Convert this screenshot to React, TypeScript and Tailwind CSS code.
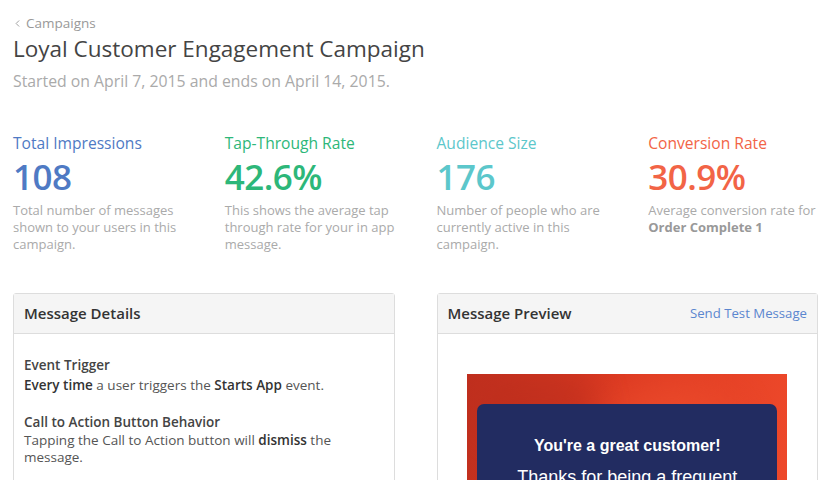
import { ChevronLeft } from 'lucide-react';

const stats = [
  {
    label: 'Total Impressions',
    value: '108',
    color: 'text-[#4f7ac4]',
    desc: <>Total number of messages shown to your users in this campaign.</>,
  },
  {
    label: 'Tap-Through Rate',
    value: '42.6%',
    color: 'text-[#2db779]',
    desc: <>This shows the average tap through rate for your in app message.</>,
  },
  {
    label: 'Audience Size',
    value: '176',
    color: 'text-[#5cc7cb]',
    desc: <>Number of people who are currently active in this campaign.</>,
  },
  {
    label: 'Conversion Rate',
    value: '30.9%',
    color: 'text-[#f26446]',
    desc: (
      <>
        Average conversion rate for <b className="font-bold text-[#999]">Order Complete 1</b>
      </>
    ),
  },
];

const App = () => {
  return (
    <div className="min-h-screen bg-white pl-[13px] pr-[12px] font-['Open_Sans',sans-serif] text-[#444]">
      {/* Header */}
      <div className="pt-[14px]">
        <a className="flex items-center gap-[3px] text-[13.5px] leading-[18px] text-[#999]">
          <ChevronLeft className="h-[11px] w-[11px] -ml-[1px]" strokeWidth={2} />
          Campaigns
        </a>
        <h1 className="mt-[2px] text-[22.5px] leading-[30px] text-[#444]">Loyal Customer Engagement Campaign</h1>
        <p className="mt-[6px] text-[15.8px] leading-[22px] text-[#aaa]">
          Started on April 7, 2015 and ends on April 14, 2015.
        </p>
      </div>

      {/* Stats */}
      <div className="mt-[42px] grid grid-cols-4 gap-[42px]">
        {stats.map((stat, index) => (
          <div key={index}>
            <div className={`text-[15.6px] leading-[18px] ${stat.color}`}>{stat.label}</div>
            <div className={`mt-[1px] text-[35px] font-semibold leading-[48px] tracking-[-0.5px] ${stat.color}`}>
              {stat.value}
            </div>
            <p className="mt-[1px] text-[13px] leading-[17px] text-[#aaa]">{stat.desc}</p>
          </div>
        ))}
      </div>

      {/* Panels */}
      <div className="mt-[40px] grid grid-cols-2 gap-[42px]">
        <div className="rounded-[3px] border border-[#ddd]">
          <div className="flex h-[40px] items-center border-b border-[#ddd] bg-[#f5f5f5] px-[10px]">
            <h2 className="text-[15px] font-semibold text-[#333]">Message Details</h2>
          </div>
          <div className="px-[10px] pt-[22px] pb-[20px] text-[13.5px] leading-[18px] text-[#555]">
            <div className="font-semibold text-[#444]">Event Trigger</div>
            <p className="mt-[2px]">
              <b className="font-semibold text-[#333]">Every time</b> a user triggers the{' '}
              <b className="font-semibold text-[#333]">Starts App</b> event.
            </p>
            <div className="mt-[19px] font-semibold text-[#444]">Call to Action Button Behavior</div>
            <p className="mt-[1px] leading-[17px]">
              Tapping the Call to Action button will <b className="font-semibold text-[#333]">dismiss</b> the
              message.
            </p>
          </div>
        </div>

        <div className="rounded-[3px] border border-[#ddd]">
          <div className="flex h-[40px] items-center justify-between border-b border-[#ddd] bg-[#f5f5f5] px-[10px]">
            <h2 className="text-[15px] font-semibold text-[#333]">Message Preview</h2>
            <a className="text-[13.2px] text-[#5b86cf]">Send Test Message</a>
          </div>
          <div className="flex justify-center pt-[40px] pb-[20px]">
            <div className="relative w-[320px] overflow-hidden bg-[linear-gradient(100deg,#bf2f1e_0%,#dc3a22_45%,#ef4a2b_100%)] px-[10px] pt-[30px] pb-[20px]">
              <div className="pointer-events-none absolute left-[130px] top-[10px] h-[120px] w-[140px] rounded-full bg-[#f0502e] opacity-60 blur-[20px]" />
              <div className="pointer-events-none absolute left-[10px] top-[0px] h-[60px] w-[120px] rounded-full bg-[#b82c1c] opacity-50 blur-[16px]" />
              <div className="relative rounded-[7px] bg-[#222c61] px-[20px] pt-[32px] pb-[24px] text-center font-['Liberation_Sans',Arial,sans-serif] text-white">
                <div className="text-[16px] font-bold leading-[20px]">You're a great customer!</div>
                <p className="mt-[10px] text-[18px] leading-[23px]">
                  Thanks for being a frequent shopper. Here's a reward just for you.
                </p>
              </div>
            </div>
          </div>
        </div>
      </div>
    </div>
  );
};

export default App;
